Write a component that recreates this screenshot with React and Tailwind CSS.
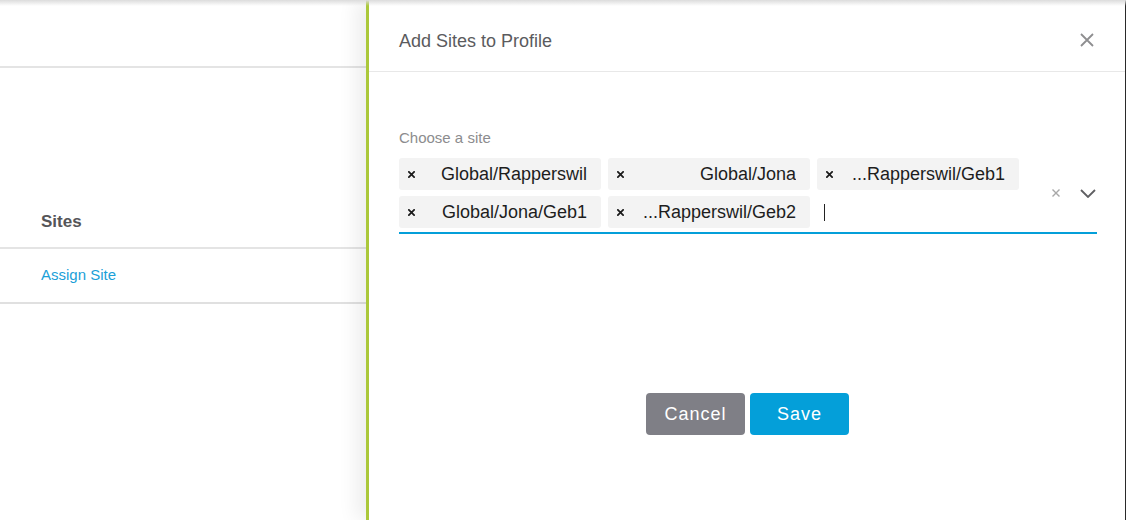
import React from "react";

const FONT = { fontFamily: '"Liberation Sans", Arial, sans-serif' };

const chips = [
  ["Global/Rapperswil", "Global/Jona", "...Rapperswil/Geb1"],
  ["Global/Jona/Geb1", "...Rapperswil/Geb2"],
];

const SmallX = ({ className, size = 7, stroke = 2 }) => (
  <svg width={size} height={size} viewBox="0 0 8 8" className={className}>
    <path d="M1 1 L7 7 M7 1 L1 7" stroke="currentColor" strokeWidth={stroke} strokeLinecap="square" />
  </svg>
);

const Chip = ({ label }) => (
  <div className="flex items-center w-[202px] h-[32px] bg-[#f3f3f3] rounded-[3px] pl-[9px] pr-[14px]">
    <SmallX className="text-[#1a1a1a] shrink-0" />
    <span className="flex-1 ml-[15px] text-right truncate text-[18px] text-[#1d1d1d]">{label}</span>
  </div>
);

export default function App() {
  return (
    <div className="relative w-[1126px] h-[520px] overflow-hidden bg-white" style={FONT}>
      {/* page behind the drawer */}
      <div className="w-[366px]">
        <div className="h-[68px] border-b-2 border-[#e4e4e4]" />
        <div className="h-[128px]" />
        <div className="h-[53px] flex items-center pl-[41px] border-b-2 border-[#e4e4e4]">
          <span className="text-[17px] font-bold text-[#555558]">Sites</span>
        </div>
        <div className="h-[55px] flex items-center pl-[41px] border-b-2 border-[#e0e0e0]">
          <span className="text-[15px] text-[#1ba0d8]">Assign Site</span>
        </div>
      </div>

      {/* drawer */}
      <div className="absolute top-0 left-[366px] w-[760px] h-[520px] bg-white border-l-[3px] border-[#abc83a] border-r border-r-[#2a2a2a] shadow-[-10px_0_18px_rgba(0,0,0,0.07)] flex flex-col">
        <div className="h-[72px] shrink-0 flex items-center justify-between pl-[30px] pr-[31px] pt-[12px] border-b border-[#e8e8e8]">
          <span className="text-[18px] text-[#5b5b5e]">Add Sites to Profile</span>
          <svg width="14" height="14" viewBox="0 0 14 14" className="text-[#8e8e90] mb-[4px]">
            <path d="M1 1 L13 13 M13 1 L1 13" stroke="currentColor" strokeWidth="1.8" />
          </svg>
        </div>

        <div className="pl-[30px] pr-[28px] pt-[57px]">
          <div className="text-[15px] text-[#8c8c8e] leading-[18px]">Choose a site</div>
          <div className="mt-[11px] flex items-center border-b-2 border-[#049fd9] pb-[4px]">
            <div className="flex-1 flex flex-col gap-[6px]">
              {chips.map((row, i) => (
                <div key={i} className="flex gap-[7px] items-center">
                  {row.map((c) => (
                    <Chip key={c} label={c} />
                  ))}
                  {i === 1 && <div className="ml-[7px] w-px h-[17px] bg-[#222]" />}
                </div>
              ))}
            </div>
            <div className="flex items-center gap-[20px] pr-[1px]">
              <SmallX className="text-[#a8a8a8]" size={8} stroke={1.4} />
              <svg width="16" height="9" viewBox="0 0 16 9" className="text-[#5f5f62]">
                <path d="M1 1 L8 8 L15 1" fill="none" stroke="currentColor" strokeWidth="1.8" />
              </svg>
            </div>
          </div>
        </div>

        <div className="mt-[159px] flex justify-center gap-[5px] pl-[1px]">
          <button className="w-[99px] h-[42px] rounded-[4px] bg-[#7f7f86] text-white text-[18px] tracking-[1px]">
            Cancel
          </button>
          <button className="w-[99px] h-[42px] rounded-[4px] bg-[#049fd9] text-white text-[18px] tracking-[1px]">
            Save
          </button>
        </div>
      </div>

      {/* shadow cast by the bar above */}
      <div className="absolute top-0 left-0 w-full h-[6px] bg-gradient-to-b from-[#dcdcdc] to-transparent pointer-events-none" />
    </div>
  );
}
